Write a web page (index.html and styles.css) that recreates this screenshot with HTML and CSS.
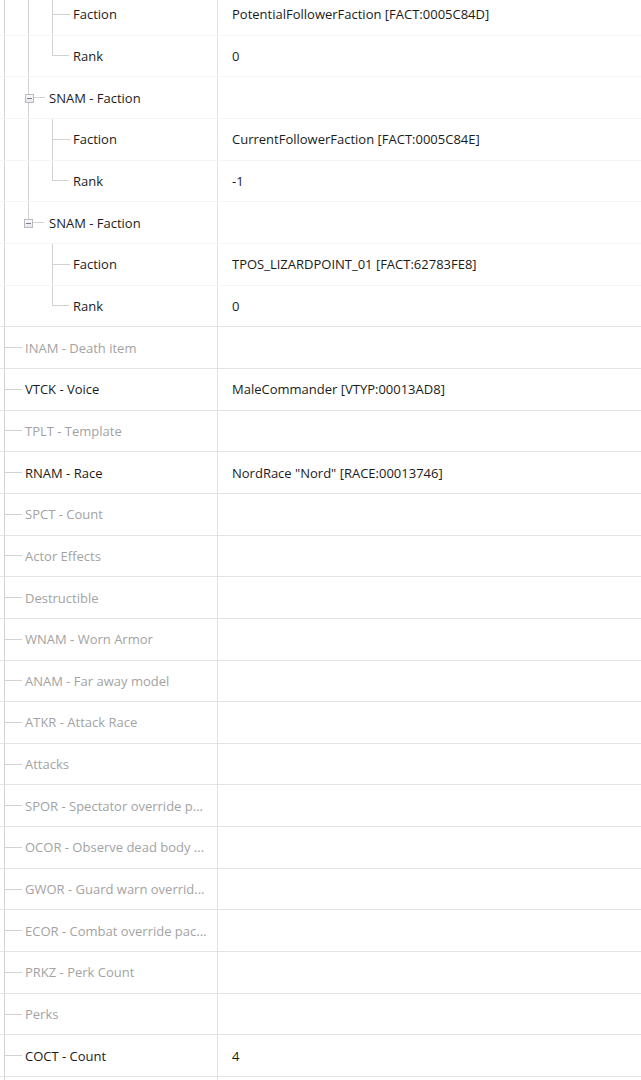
FILE: index.html
```html
<!DOCTYPE html>
<html lang="en">
<head>
    <meta charset="UTF-8">
    <meta name="viewport" content="width=device-width, initial-scale=1.0">
    <title>Record View</title>
    <link rel="stylesheet" href="styles.css">
</head>
<body>
    <div class="view">
        <div class="list">
            <!-- SNAM children (scrolled) -->
            <div class="row sub">
                <div class="name"><span class="g line"></span><span class="g line"></span><span class="g tee"><i></i></span><span class="label">Faction</span></div>
                <div class="value">PotentialFollowerFaction [FACT:0005C84D]</div>
            </div>
            <div class="row sub">
                <div class="name"><span class="g line"></span><span class="g line"></span><span class="g end"><i></i></span><span class="label">Rank</span></div>
                <div class="value">0</div>
            </div>
            <div class="row sub">
                <div class="name"><span class="g line"></span><span class="g tee grp"><i></i></span><span class="label">SNAM - Faction</span></div>
                <div class="value"></div>
            </div>
            <div class="row sub">
                <div class="name"><span class="g line"></span><span class="g line"></span><span class="g tee"><i></i></span><span class="label">Faction</span></div>
                <div class="value">CurrentFollowerFaction [FACT:0005C84E]</div>
            </div>
            <div class="row sub">
                <div class="name"><span class="g line"></span><span class="g line"></span><span class="g end"><i></i></span><span class="label">Rank</span></div>
                <div class="value">-1</div>
            </div>
            <div class="row sub">
                <div class="name"><span class="g line"></span><span class="g end grp"><i></i></span><span class="label">SNAM - Faction</span></div>
                <div class="value"></div>
            </div>
            <div class="row sub">
                <div class="name"><span class="g line"></span><span class="g"></span><span class="g tee"><i></i></span><span class="label">Faction</span></div>
                <div class="value">TPOS_LIZARDPOINT_01 [FACT:62783FE8]</div>
            </div>
            <div class="row">
                <div class="name"><span class="g line"></span><span class="g"></span><span class="g end"><i></i></span><span class="label">Rank</span></div>
                <div class="value">0</div>
            </div>

            <!-- top level fields -->
            <div class="row dim">
                <div class="name"><span class="g tee"><i></i></span><span class="label">INAM - Death item</span></div>
                <div class="value"></div>
            </div>
            <div class="row">
                <div class="name"><span class="g tee"><i></i></span><span class="label">VTCK - Voice</span></div>
                <div class="value">MaleCommander [VTYP:00013AD8]</div>
            </div>
            <div class="row dim">
                <div class="name"><span class="g tee"><i></i></span><span class="label">TPLT - Template</span></div>
                <div class="value"></div>
            </div>
            <div class="row">
                <div class="name"><span class="g tee"><i></i></span><span class="label">RNAM - Race</span></div>
                <div class="value">NordRace "Nord" [RACE:00013746]</div>
            </div>
            <div class="row dim">
                <div class="name"><span class="g tee"><i></i></span><span class="label">SPCT - Count</span></div>
                <div class="value"></div>
            </div>
            <div class="row dim">
                <div class="name"><span class="g tee"><i></i></span><span class="label">Actor Effects</span></div>
                <div class="value"></div>
            </div>
            <div class="row dim">
                <div class="name"><span class="g tee"><i></i></span><span class="label">Destructible</span></div>
                <div class="value"></div>
            </div>
            <div class="row dim">
                <div class="name"><span class="g tee"><i></i></span><span class="label">WNAM - Worn Armor</span></div>
                <div class="value"></div>
            </div>
            <div class="row dim">
                <div class="name"><span class="g tee"><i></i></span><span class="label">ANAM - Far away model</span></div>
                <div class="value"></div>
            </div>
            <div class="row dim">
                <div class="name"><span class="g tee"><i></i></span><span class="label">ATKR - Attack Race</span></div>
                <div class="value"></div>
            </div>
            <div class="row dim">
                <div class="name"><span class="g tee"><i></i></span><span class="label">Attacks</span></div>
                <div class="value"></div>
            </div>
            <div class="row dim">
                <div class="name"><span class="g tee"><i></i></span><span class="label">SPOR - Spectator override p...</span></div>
                <div class="value"></div>
            </div>
            <div class="row dim">
                <div class="name"><span class="g tee"><i></i></span><span class="label">OCOR - Observe dead body ...</span></div>
                <div class="value"></div>
            </div>
            <div class="row dim">
                <div class="name"><span class="g tee"><i></i></span><span class="label">GWOR - Guard warn overrid...</span></div>
                <div class="value"></div>
            </div>
            <div class="row dim">
                <div class="name"><span class="g tee"><i></i></span><span class="label">ECOR - Combat override pac...</span></div>
                <div class="value"></div>
            </div>
            <div class="row dim">
                <div class="name"><span class="g tee"><i></i></span><span class="label">PRKZ - Perk Count</span></div>
                <div class="value"></div>
            </div>
            <div class="row dim">
                <div class="name"><span class="g tee"><i></i></span><span class="label">Perks</span></div>
                <div class="value"></div>
            </div>
            <div class="row">
                <div class="name"><span class="g tee"><i></i></span><span class="label">COCT - Count</span></div>
                <div class="value">4</div>
            </div>
            <div class="row">
                <div class="name"><span class="g line"></span></div>
                <div class="value"></div>
            </div>
        </div>
    </div>
</body>
</html>
```

FILE: styles.css
```css
body {
    margin: 0;
    padding: 0;
    background-color: #fff;
    font-family: 'Open Sans', 'Noto Sans', sans-serif;
    font-size: 13px;
    color: #1b1b1b;
    overflow: hidden;
}
.view {
    height: 1080px;
    overflow: hidden;
}
.list {
    margin-top: -6px;
}
.row {
    display: flex;
    height: 41.67px;
    box-sizing: border-box;
    border-bottom: 1px solid #e3e3e3;
}
.row.sub {
    border-bottom-color: #f4f4f4;
}
.row.dim .label {
    color: #a3a3a3;
}
.name {
    width: 218px;
    flex-shrink: 0;
    box-sizing: border-box;
    padding-left: 4px;
    border-right: 1px solid #e3e3e3;
    display: flex;
    align-items: stretch;
    white-space: nowrap;
    overflow: hidden;
}
.label {
    align-self: center;
    padding-left: 1px;
}
.value {
    flex: 1;
    padding-left: 14px;
    display: flex;
    align-items: center;
    white-space: nowrap;
}

/* tree guides */
.g {
    width: 24px;
    flex-shrink: 0;
    box-sizing: border-box;
    position: relative;
}
.g.line {
    border-left: 1px solid #d2d2d2;
    margin-bottom: -1px;
}
.g.tee,
.g.end {
    width: 20px;
    border-left: 1px solid #d2d2d2;
    margin-bottom: -1px;
}
.g.end {
    border-left: none;
}
.g i {
    display: block;
    height: 50%;
    width: 17px;
    box-sizing: border-box;
    border-bottom: 1px solid #d2d2d2;
}
.g.end i {
    border-left: 1px solid #d2d2d2;
}
.g.grp i {
    width: 16px;
}
.g.grp::after {
    content: "";
    position: absolute;
    left: -4px;
    top: calc(50% - 4px);
    width: 7px;
    height: 7px;
    border: 1px solid #b9b9c4;
    background: linear-gradient(#fafafa, #e9e9ee);
}
.g.grp::before {
    content: "";
    position: absolute;
    left: -2px;
    top: calc(50%);
    width: 5px;
    height: 1px;
    background: #7a7a92;
    z-index: 1;
}
```
